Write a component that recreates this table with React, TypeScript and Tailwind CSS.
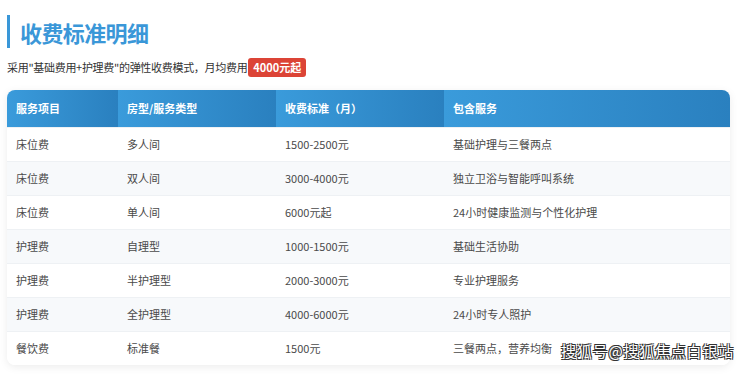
import React from "react";

type Row = {
  item: string;
  type: string;
  price: string;
  service: string;
};

const rows: Row[] = [
  { item: "床位费", type: "多人间", price: "1500-2500元", service: "基础护理与三餐两点" },
  { item: "床位费", type: "双人间", price: "3000-4000元", service: "独立卫浴与智能呼叫系统" },
  { item: "床位费", type: "单人间", price: "6000元起", service: "24小时健康监测与个性化护理" },
  { item: "护理费", type: "自理型", price: "1000-1500元", service: "基础生活协助" },
  { item: "护理费", type: "半护理型", price: "2000-3000元", service: "专业护理服务" },
  { item: "护理费", type: "全护理型", price: "4000-6000元", service: "24小时专人照护" },
  { item: "餐饮费", type: "标准餐", price: "1500元", service: "三餐两点，营养均衡" },
];

const headers = ["服务项目", "房型/服务类型", "收费标准（月）", "包含服务"];

const cols = "grid grid-cols-[111px_158px_168px_1fr]";

export default function App() {
  return (
    <div className="relative w-[740px] h-[376px] overflow-hidden bg-white font-['Noto_Sans_CJK_SC',sans-serif] text-[#4a4a4a]">
      {/* 标题 */}
      <div className="pt-[15px] px-[7px]">
        <div className="flex items-center h-[33px] border-l-[3px] border-[#3a97d8] pl-[10px]">
          <h2 className="text-[22px] font-bold leading-none text-[#3a97d8] tracking-[-0.6px]">收费标准明细</h2>
        </div>
        <p className="mt-[9px] flex items-center text-[11px] text-[#333] h-[20px] tracking-[-0.3px]">
          采用"基础费用+护理费"的弹性收费模式，月均费用
          <span className="ml-[1px] inline-flex items-center h-[19px] px-[5px] rounded-[3px] bg-[#dc4436] text-white text-[11px] font-bold tracking-normal">
            4000元起
          </span>
        </p>
      </div>

      {/* 表格 */}
      <div className="mx-[7px] mt-[13px] w-[723px] rounded-[8px] overflow-hidden shadow-[0_2px_8px_rgba(0,0,0,0.08)]">
        <div className={`${cols} h-[37px] text-white text-[11px] font-bold`}>
          {headers.map((h) => (
            <div key={h} className="flex items-center pl-[9px] bg-linear-to-r from-[#3a9bdb] to-[#2a80bf]">
              {h}
            </div>
          ))}
        </div>
        {rows.map((r, i) => (
          <div
            key={i}
            className={`${cols} h-[34px] text-[11px] border-t border-[#eef1f4] ${i % 2 === 1 ? "bg-[#f7f9fb]" : "bg-white"}`}
          >
            <div className="flex items-center pl-[9px]">{r.item}</div>
            <div className="flex items-center pl-[9px]">{r.type}</div>
            <div className="flex items-center pl-[9px]">{r.price}</div>
            <div className="flex items-center pl-[9px]">{r.service}</div>
          </div>
        ))}
      </div>

      {/* 水印 */}
      <div className="absolute left-[561px] top-[340px] text-[15px] leading-[22px] text-white tracking-[0.8px] [text-shadow:_-1px_-1px_0_#333,1px_-1px_0_#333,-1px_1px_0_#333,1px_1px_0_#333]">
        搜狐号@搜狐焦点白银站
      </div>
    </div>
  );
}
